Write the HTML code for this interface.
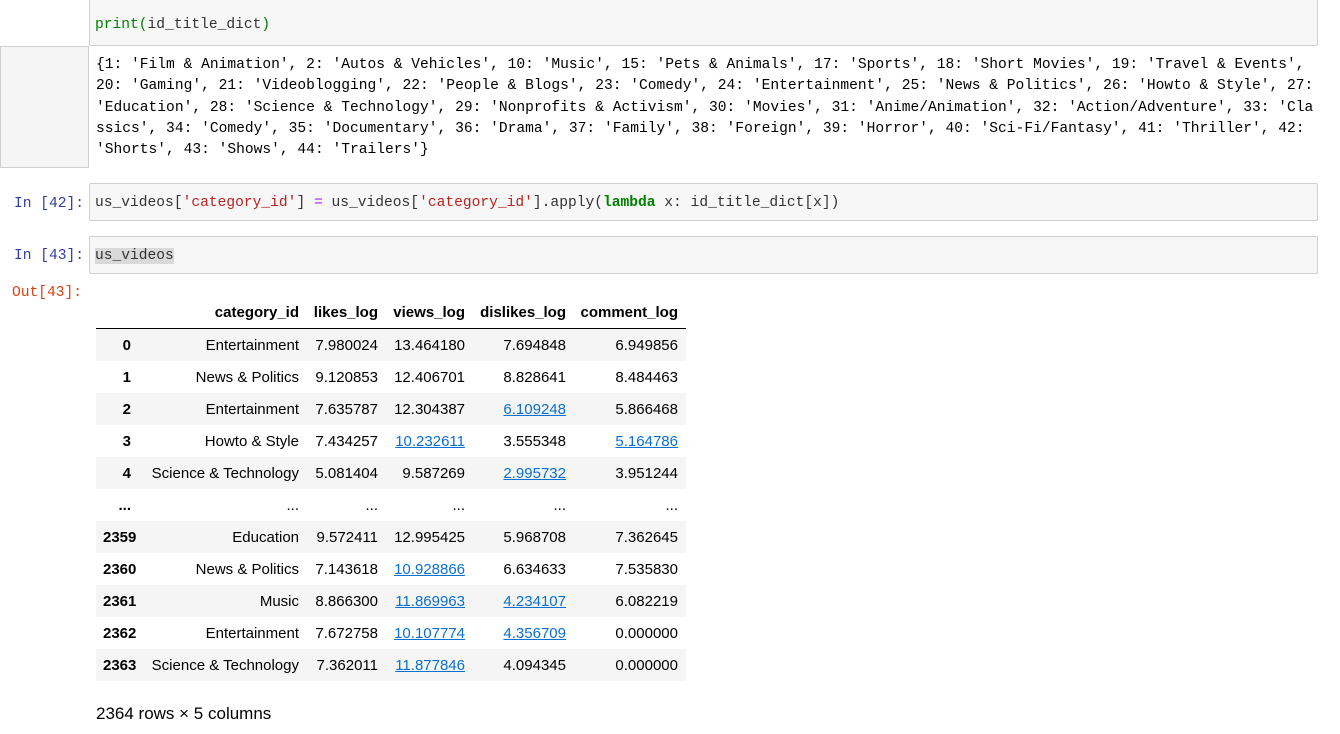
<!DOCTYPE html>
<html><head><meta charset="utf-8"><style>
body{margin:0;width:1340px;height:734px;background:#fff;position:relative;overflow:hidden;font-family:"Liberation Sans",Arial,sans-serif}
.mono{font-family:"Liberation Mono","Noto Sans CJK KR",monospace;font-size:14.6px;white-space:pre}
.cell{position:absolute;left:89px;width:1229px;background:#f7f7f7;border:1px solid #cfcfcf;border-radius:2px;box-sizing:border-box}
.prompt{position:absolute;font-family:"Liberation Mono",monospace;font-size:14.6px;white-space:pre}
.line{position:absolute;left:95px}
table{position:absolute;left:96px;top:296px;border-collapse:collapse;font-size:15px;color:#000;table-layout:fixed;width:590px}
td,th{padding:0 7px;text-align:right;height:32px;white-space:nowrap;overflow:visible}
th{font-weight:bold}
thead th{border-bottom:1px solid #000;height:32px;vertical-align:middle}
tbody tr:nth-child(odd){background:#f5f5f5}
a{color:#0b6fcf;text-decoration:underline}
</style></head><body>
<div class="cell" style="top:-5px;height:51px"></div>
<div class="mono line" style="top:17px;color:#008000">print(<span style="color:#333">id_title_dict</span>)</div>
<div style="position:absolute;left:0;top:46px;width:89px;height:122px;background:#f5f5f5;border:1px solid #cfcfcf;box-sizing:border-box"></div>
<div class="mono" style="position:absolute;left:96px;top:55px;line-height:21.3px;color:#000">{1: 'Film &amp; Animation', 2: 'Autos &amp; Vehicles', 10: 'Music', 15: 'Pets &amp; Animals', 17: 'Sports', 18: 'Short Movies', 19: 'Travel &amp; Events',
20: 'Gaming', 21: 'Videoblogging', 22: 'People &amp; Blogs', 23: 'Comedy', 24: 'Entertainment', 25: 'News &amp; Politics', 26: 'Howto &amp; Style', 27:
'Education', 28: 'Science &amp; Technology', 29: 'Nonprofits &amp; Activism', 30: 'Movies', 31: 'Anime/Animation', 32: 'Action/Adventure', 33: 'Cla
ssics', 34: 'Comedy', 35: 'Documentary', 36: 'Drama', 37: 'Family', 38: 'Foreign', 39: 'Horror', 40: 'Sci-Fi/Fantasy', 41: 'Thriller', 42:
'Shorts', 43: 'Shows', 44: 'Trailers'}</div>

<div class="prompt" style="left:14px;top:196px;color:#303f9f">In [42]:</div>
<div class="cell" style="top:183px;height:38px"></div>
<div class="mono line" style="top:195px;color:#333">us_videos[<span style="color:#ba2121">'category_id'</span>] <span style="color:#aa22ff">=</span> us_videos[<span style="color:#ba2121">'category_id'</span>].apply(<span style="color:#008000;font-weight:bold">lambda</span> x: id_title_dict[x])</div>

<div class="prompt" style="left:14px;top:248px;color:#303f9f">In [43]:</div>
<div class="cell" style="top:236px;height:38px"></div>
<div class="mono line" style="top:248px;color:#333"><span style="background:#d9d9d9">us_videos</span></div>

<div class="prompt" style="left:12px;top:285px;color:#d84315">Out[43]:</div>

<table>
<colgroup><col style="width:42px"><col style="width:168px"><col style="width:79px"><col style="width:87px"><col style="width:101px"><col style="width:113px"></colgroup>
<thead><tr><th></th><th>category_id</th><th>likes_log</th><th>views_log</th><th>dislikes_log</th><th style="padding-right:8px">comment_log</th></tr></thead>
<tbody>
<tr><th>0</th><td>Entertainment</td><td>7.980024</td><td>13.464180</td><td>7.694848</td><td style="padding-right:8px">6.949856</td></tr>
<tr><th>1</th><td>News &amp; Politics</td><td>9.120853</td><td>12.406701</td><td>8.828641</td><td style="padding-right:8px">8.484463</td></tr>
<tr><th>2</th><td>Entertainment</td><td>7.635787</td><td>12.304387</td><td><a>6.109248</a></td><td style="padding-right:8px">5.866468</td></tr>
<tr><th>3</th><td>Howto &amp; Style</td><td>7.434257</td><td><a>10.232611</a></td><td>3.555348</td><td style="padding-right:8px"><a>5.164786</a></td></tr>
<tr><th>4</th><td>Science &amp; Technology</td><td>5.081404</td><td>9.587269</td><td><a>2.995732</a></td><td style="padding-right:8px">3.951244</td></tr>
<tr style="background:#fff"><th>...</th><td>...</td><td>...</td><td>...</td><td>...</td><td style="padding-right:8px">...</td></tr>
<tr><th>2359</th><td>Education</td><td>9.572411</td><td>12.995425</td><td>5.968708</td><td style="padding-right:8px">7.362645</td></tr>
<tr style="background:#fff"><th>2360</th><td>News &amp; Politics</td><td>7.143618</td><td><a>10.928866</a></td><td>6.634633</td><td style="padding-right:8px">7.535830</td></tr>
<tr style="background:#f5f5f5"><th>2361</th><td>Music</td><td>8.866300</td><td><a>11.869963</a></td><td><a>4.234107</a></td><td style="padding-right:8px">6.082219</td></tr>
<tr style="background:#fff"><th>2362</th><td>Entertainment</td><td>7.672758</td><td><a>10.107774</a></td><td><a>4.356709</a></td><td style="padding-right:8px">0.000000</td></tr>
<tr style="background:#f5f5f5"><th>2363</th><td>Science &amp; Technology</td><td>7.362011</td><td><a>11.877846</a></td><td>4.094345</td><td style="padding-right:8px">0.000000</td></tr>
</tbody></table>
<div style="position:absolute;left:96px;top:704px;font-size:17px;color:#000">2364 rows × 5 columns</div>
</body></html>
